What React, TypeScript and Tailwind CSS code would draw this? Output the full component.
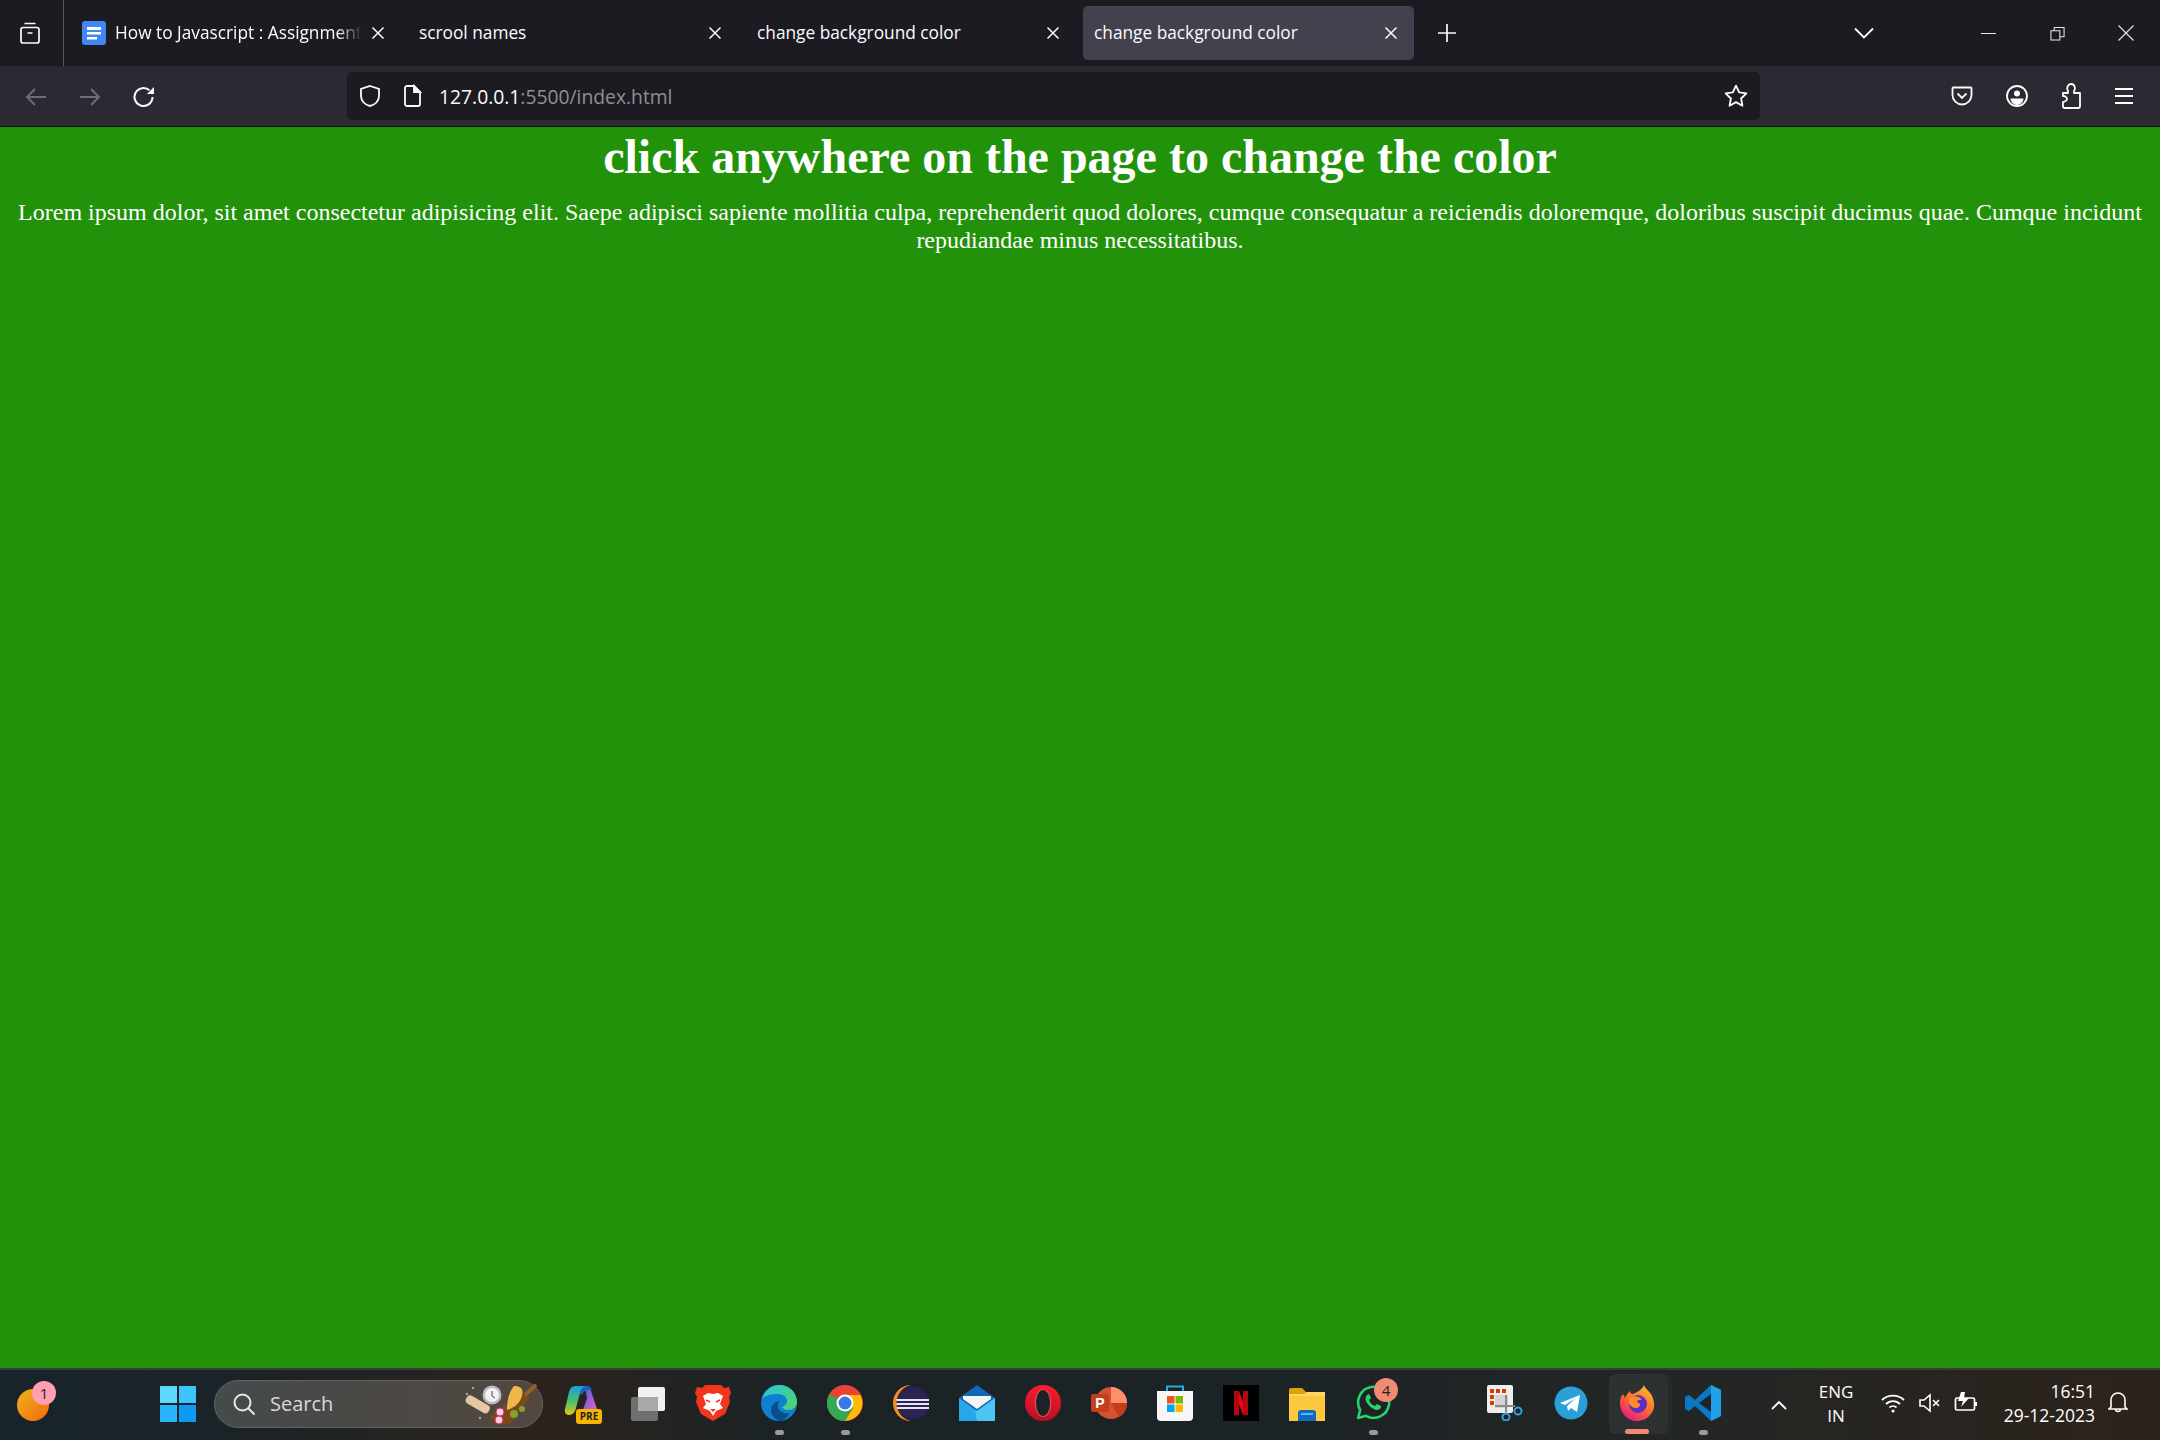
import type { ReactNode } from "react";

const chromeFont = "font-['Open_Sans','Noto_Sans',sans-serif]";

function CloseIcon({ className = "" }: { className?: string }) {
    return (
        <svg viewBox="0 0 16 16" className={`h-4 w-4 shrink-0 ${className}`} fill="none" stroke="#fbfbfe" strokeWidth="1.5">
            <path d="M2.500 2.500l11 11M13.500 2.500l-11 11" />
        </svg>
    );
}

interface TabProps {
    title: string;
    active?: boolean;
    icon?: ReactNode;
    width: string;
    right: string;
    fade?: boolean;
}

function Tab({ title, active, icon, width, right, fade }: TabProps) {
    return (
        <div className={`${width} ${right} flex h-[54px] shrink-0 items-center rounded-[5px] pl-[11px] ${active ? "bg-[#42414d]" : ""}`}>
            {icon}
            <span
                className={`mr-[8px] min-w-0 flex-1 overflow-hidden whitespace-nowrap text-[17.300px] text-[#fbfbfe] ${fade ? "[mask-image:linear-gradient(to_right,black_90%,transparent)]" : ""}`}
            >
                {title}
            </span>
            <CloseIcon />
        </div>
    );
}

function DocsIcon() {
    return (
        <svg viewBox="0 0 24 24" className="mr-[9px] h-6 w-6 shrink-0">
            <rect width="24" height="24" rx="3" fill="#4285f4" />
            <path d="M5 6h14v3H5zM5 11h14v2.500H5zM5 16h10v2.500H5z" fill="#fff" />
        </svg>
    );
}

function Tool({ children, className = "" }: { children: ReactNode; className?: string }) {
    return <div className={`flex h-full shrink-0 items-center justify-center ${className}`}>{children}</div>;
}

function Slot({ children, dot }: { children?: ReactNode; dot?: boolean }) {
    return (
        <div className="flex h-full w-[66px] shrink-0 flex-col items-center pt-[15px]">
            <div className="h-9 w-9">{children}</div>
            {dot && <div className="mt-[9px] h-[5px] w-[9px] rounded-full bg-[#9a9a9a]" />}
        </div>
    );
}

function Badge({ value, color, className }: { value: string; color: string; className: string }) {
    return (
        <div className={`absolute flex h-6 w-6 items-center justify-center rounded-full text-[15px] text-[#222] ${color} ${className}`}>
            {value}
        </div>
    );
}

function Copilot() {
    return (
        <div className="relative h-9 w-9">
            <svg viewBox="0 0 36 36" className="h-9 w-9">
                <defs>
                    <linearGradient id="copA" x1="0" y1="0" x2="0" y2="1">
                        <stop offset="0" stopColor="#1f9de0" />
                        <stop offset="0.55" stopColor="#4fc06a" />
                        <stop offset="1" stopColor="#f2c318" />
                    </linearGradient>
                    <linearGradient id="copB" x1="0" y1="0" x2="1" y2="1">
                        <stop offset="0" stopColor="#2f6fe0" />
                        <stop offset="0.5" stopColor="#a45ad8" />
                        <stop offset="1" stopColor="#ee6ea8" />
                    </linearGradient>
                </defs>
                <path d="M22 1c3 0 5 2 6 5l6 18c1 4-1 6-4 6h-8c-3 0-3-3-2-5l4-12z" fill="url(#copB)" />
                <path d="M12 1h11c-3 1-5 3-6 7l-4 15c-1 4-3 7-7 7-3 0-5-3-4-6L6 7c1-4 3-6 6-6z" fill="url(#copA)" />
                <path d="M12 1h12c3 0 4 2 5 5 -3-2-7-1-9 2-1 2-2 3-3 0 1-4 3-6 6-7z" fill="#1664c8" />
            </svg>
            <div className="absolute bottom-[-3px] right-[-3px] flex h-[15px] w-[26px] items-center justify-center rounded-[3px] bg-[#f7b500] text-[10px] font-bold text-[#222]">
                PRE
            </div>
        </div>
    );
}

function TaskView() {
    return (
        <svg viewBox="0 0 36 36" className="h-9 w-9">
            <rect x="2" y="12" width="27" height="24" rx="2" fill="#6f6f6f" />
            <rect x="9" y="2" width="27" height="24" rx="2" fill="#f1f1f1" />
            <rect x="9" y="12" width="20" height="14" fill="#a8a8a8" />
        </svg>
    );
}

function Brave() {
    return (
        <svg viewBox="0 0 36 36" className="h-9 w-9">
            <path d="M10 0h16l3 3 5-1 2 6-2 4 1 5-5 12-12 7-12-7L1 17l1-5-2-4 2-6 5 1z" fill="#f1361d" />
            <path d="M18 9l-5-1-5 3 3 8-3 4 7 3 3 5 3-5 7-3-3-4 3-8-5-3z" fill="#fff" />
            <path d="M15 24h6l-3 3z" fill="#f1361d" />
            <path d="M11 15l4 2M25 15l-4 2" stroke="#f1361d" strokeWidth="1.500" />
        </svg>
    );
}

function Edge() {
    return (
        <svg viewBox="0 0 36 36" className="h-9 w-9">
            <defs>
                <linearGradient id="edgeA" x1="0" y1="0" x2="1" y2="1">
                    <stop offset="0" stopColor="#2cc3d8" />
                    <stop offset="1" stopColor="#52d66a" />
                </linearGradient>
            </defs>
            <circle cx="18" cy="18" r="18" fill="#0f7fd0" />
            <path d="M1 15C3 6 10 0 18 0c10 0 18 7 18 17 0 5-4 8-9 8-3 0-5-1-6-3 3-1 5-3 5-6 0-4-4-7-9-7-7 0-14 1-16 6z" fill="url(#edgeA)" />
            <path d="M20 36c-6-1-10-6-10-11 0-5 4-9 9-9-3 2-3 7 0 10 3 2 6 3 10 2-4 5-6 8-9 8z" fill="#0b4f8a" />
        </svg>
    );
}

function Chrome() {
    return (
        <svg viewBox="0 0 36 36" className="h-9 w-9">
            <circle cx="18" cy="18" r="18" fill="#ea4335" />
            <path d="M18 18L2.400 9A18 18 0 0 0 18 36l8-14z" fill="#34a853" />
            <path d="M18 10h15.500A18 18 0 0 1 18 36l8-13z" fill="#fbbc04" />
            <circle cx="18" cy="18" r="8.500" fill="#fff" />
            <circle cx="18" cy="18" r="6.500" fill="#3b78e7" />
        </svg>
    );
}

function Eclipse() {
    return (
        <svg viewBox="0 0 36 36" className="h-9 w-9">
            <path d="M18 0C8 0 0 8 0 18s8 18 18 18C9 34 4 27 4 18S9 2 18 0z" fill="#f3901d" />
            <circle cx="20" cy="18" r="16.500" fill="#2c2255" />
            <path d="M3.500 14h33v2h-33zM3.500 18h33v2h-33zM4 22h32v2H4z" fill="#e8e6f0" />
        </svg>
    );
}

function Mail() {
    return (
        <svg viewBox="0 0 36 36" className="h-9 w-9">
            <path d="M18 0l18 13v23H0V13z" fill="#0f67b5" />
            <path d="M4 11h28v3L18 24 4 14z" fill="#f4f4f4" />
            <path d="M0 13l18 13 18-13v23H0z" fill="#27a6ea" />
            <path d="M36 13v23H18l-2-11 2 1z" fill="#4cc4f4" />
        </svg>
    );
}

function Opera() {
    return (
        <svg viewBox="0 0 36 36" className="h-9 w-9">
            <defs>
                <linearGradient id="opA" x1="0" y1="0" x2="0" y2="1">
                    <stop offset="0" stopColor="#ff1b2d" />
                    <stop offset="1" stopColor="#b80f22" />
                </linearGradient>
            </defs>
            <circle cx="18" cy="18" r="18" fill="url(#opA)" />
            <ellipse cx="18" cy="18" rx="8.500" ry="14" fill="#d44a58" />
            <ellipse cx="18" cy="18" rx="7" ry="13" fill="#1c2326" />
        </svg>
    );
}

function PowerPoint() {
    return (
        <svg viewBox="0 0 36 36" className="h-9 w-9">
            <circle cx="20" cy="18" r="16" fill="#d35230" />
            <path d="M20 2a16 16 0 0 1 16 16H20z" fill="#ff8f6b" />
            <path d="M20 18h16a16 16 0 0 1-8 14z" fill="#c43e1c" />
            <rect x="0" y="9" width="18" height="18" rx="2" fill="#c43e1c" />
            <text x="9" y="23" textAnchor="middle" fontFamily="Liberation Sans" fontWeight="700" fontSize="14" fill="#fff">
                P
            </text>
        </svg>
    );
}

function Store() {
    return (
        <svg viewBox="0 0 36 36" className="h-9 w-9">
            <path d="M10 7V1.500h16V7" fill="none" stroke="#1eaee8" strokeWidth="2" />
            <path d="M0 6h36v26a4 4 0 0 1-4 4H4a4 4 0 0 1-4-4z" fill="#f6f6f6" />
            <rect x="10" y="11" width="7.500" height="7.500" fill="#f25022" />
            <rect x="18.500" y="11" width="7.500" height="7.500" fill="#7fba00" />
            <rect x="10" y="19.500" width="7.500" height="7.500" fill="#00a4ef" />
            <rect x="18.500" y="19.500" width="7.500" height="7.500" fill="#ffb900" />
        </svg>
    );
}

function Netflix() {
    return (
        <svg viewBox="0 0 36 36" className="h-9 w-9">
            <rect width="36" height="36" fill="#000" />
            <path d="M11 6h5l9 24h-5z" fill="#e50914" />
            <path d="M11 6h5v24l-5 .500zM20 6h5v24.500L20 30z" fill="#b20710" />
        </svg>
    );
}

function Files() {
    return (
        <svg viewBox="0 0 36 36" className="h-9 w-9">
            <path d="M0 5a2 2 0 0 1 2-2h11l4 4h19v8H0z" fill="#e0a106" />
            <path d="M0 9h36v27H0z" fill="#fcc93e" />
            <path d="M0 9h15l3-2h18v4H0z" fill="#ffd862" />
            <path d="M9 36v-8a3 3 0 0 1 3-3h12a3 3 0 0 1 3 3v8z" fill="#0f6cbd" />
            <rect x="12" y="28" width="12" height="2" fill="#59b4ee" />
        </svg>
    );
}

function WhatsApp() {
    return (
        <svg viewBox="0 0 36 36" className="h-9 w-9">
            <path d="M3 33l2.200-8A15.500 15.500 0 1 1 11 30.800z" fill="none" stroke="#25d366" strokeWidth="2.600" strokeLinejoin="round" />
            <path d="M12 10c-2 2-2 5 0 8 3 4 6 6 9 7 3 0 5-1 5-4l-4-2-2 2c-3-1-5-3-6-6l2-2-2-4z" fill="#25d366" />
        </svg>
    );
}

function Snip() {
    return (
        <svg viewBox="0 0 36 36" className="h-9 w-9">
            <rect x="0" y="0" width="26" height="28" rx="2" fill="#eeeeee" />
            <path d="M3 4h4v4H3zM9 4h4v4H9zM15 4h4v4h-4zM3 10h4v4H3zM3 16h4v4H3z" fill="#d83b01" />
            <path d="M8 10h13v13H8z" fill="#d4d4d4" />
            <path d="M19 10v17M8 21h20" stroke="#8a8a8a" strokeWidth="2" />
            <circle cx="31" cy="26" r="3.500" fill="none" stroke="#2aa4dc" strokeWidth="2" />
            <circle cx="19" cy="32" r="3.500" fill="none" stroke="#2aa4dc" strokeWidth="2" />
        </svg>
    );
}

function Telegram() {
    return (
        <svg viewBox="0 0 36 36" className="h-9 w-9">
            <circle cx="18" cy="18" r="16.500" fill="#2a9fd8" />
            <path d="M7 18l20-8-3 17-6-4-3 3-1-5 9-8-11 7z" fill="#fff" />
        </svg>
    );
}

function Firefox() {
    return (
        <svg viewBox="0 0 36 36" className="h-9 w-9">
            <defs>
                <linearGradient id="foxA" x1="0.800" y1="0" x2="0.200" y2="1">
                    <stop offset="0" stopColor="#ffbd2e" />
                    <stop offset="0.5" stopColor="#ff6b2b" />
                    <stop offset="1" stopColor="#e31587" />
                </linearGradient>
            </defs>
            <path d="M25 0c1 4 6 6 8 11 3 7 3 13-1 18-4 5-9 7-14 7C8 36 1 28 1 18c0-4 1-7 3-9l2 4c1-3 3-5 5-7 0 2 1 3 3 3 4-2 9-4 11-9z" fill="url(#foxA)" />
            <circle cx="19" cy="19" r="9" fill="#5c2dc7" />
            <path d="M10 13c5-3 11-2 13 2-3-1-5 1-5 2 3 1 4 3 2 5-3 2-8 1-10-4z" fill="#ff8a2a" />
        </svg>
    );
}

function VsCode() {
    return (
        <svg viewBox="0 0 36 36" className="h-9 w-9">
            <path d="M26 0l10 5v26l-10 5L10 21l-6 5-4-2V12l4-2 6 5z" fill="#0a78c4" />
            <path d="M26 0l10 5v26l-10 5z" fill="#22a0ea" />
            <path d="M26 9L14 18l12 9z" fill="#1e2326" />
            <path d="M0 14l4-2 4 6-4 6-4-2 3-4z" fill="#0a78c4" />
        </svg>
    );
}

function SearchArt() {
    return (
        <svg viewBox="0 0 76 44" className="h-11 w-[76px]">
            <circle cx="3" cy="12" r="1" fill="#d8c9a8" />
            <circle cx="9" cy="6" r="1" fill="#c9c9d6" />
            <circle cx="16" cy="36" r="1" fill="#d8c9a8" />
            <path d="M26 34l30-22 10 3-20 27H32z" fill="#7b4a1c" />
            <path d="M50 4c6 0 10 2 8 10-2 7-8 12-15 14 0-10 2-18 7-24z" fill="#eeb64b" />
            <rect x="1" y="18" width="26" height="9" rx="4" transform="rotate(30 14 22)" fill="#e3c8a0" />
            <circle cx="28" cy="13" r="9.500" fill="#b9b9c8" />
            <circle cx="28" cy="13" r="7" fill="#f2f2f2" />
            <path d="M28 9v5l3 2" stroke="#444" strokeWidth="1" fill="none" />
            <circle cx="36" cy="30" r="4" fill="#f7d5e0" stroke="#e0265e" />
            <circle cx="35" cy="38" r="4" fill="#f7d5e0" stroke="#e0265e" />
            <circle cx="50" cy="32" r="4" fill="#8aa02a" />
            <circle cx="58" cy="27" r="3" fill="#8aa02a" />
            <path d="M62 12l9-8" stroke="#9a5e22" strokeWidth="4" strokeLinecap="round" />
        </svg>
    );
}

export default function App() {
    return (
        <div className="flex h-[1440px] w-[2160px] flex-col overflow-hidden bg-[#22920a]">
            {/* tab strip */}
            <div className={`flex h-[66px] shrink-0 items-center bg-[#1c1b22] ${chromeFont}`}>
                <div className="flex h-full w-[64px] shrink-0 items-center justify-center border-r border-[#55555c] pr-[3px]">
                    <svg viewBox="0 0 24 24" className="h-6 w-6" fill="none" stroke="#fbfbfe" strokeWidth="1.700">
                        <path d="M6.500 2.500h11M3 8.500a2 2 0 0 1 2-2h14a2 2 0 0 1 2 2V20a2 2 0 0 1-2 2H5a2 2 0 0 1-2-2zM9.500 12h5" />
                    </svg>
                </div>
                <div className="flex pl-[7px]">
                    <Tab title="How to Javascript : Assignment" width="w-[337px]" right="pr-[22px]" icon={<DocsIcon />} fade />
                    <Tab title="scrool names" width="w-[338px]" right="pr-[23px]" />
                    <Tab title="change background color" width="w-[337px]" right="pr-[22px]" />
                    <Tab title="change background color" width="w-[331px]" right="pr-[15px]" active />
                </div>
                <svg viewBox="0 0 20 20" className="ml-[23px] h-5 w-5" fill="none" stroke="#fbfbfe" strokeWidth="1.700">
                    <path d="M10 1v18M1 10h18" />
                </svg>
                <svg viewBox="0 0 20 12" className="ml-[397px] h-3 w-5" fill="none" stroke="#fbfbfe" strokeWidth="1.800">
                    <path d="M1 1.500l9 9 9-9" />
                </svg>
                <div className="ml-auto flex h-full items-center">
                    <Tool className="w-[69px]">
                        <div className="h-px w-[15px] bg-[#e8e8e8]" />
                    </Tool>
                    <Tool className="w-[69px]">
                        <svg viewBox="0 0 16 16" className="h-[15px] w-[15px]" fill="none" stroke="#e8e8e8" strokeWidth="1.100">
                            <path d="M1 5h9.500v10H1zM4.500 5V1.500H15v10h-4.500" />
                        </svg>
                    </Tool>
                    <Tool className="w-[68px]">
                        <svg viewBox="0 0 16 16" className="h-4 w-4" fill="none" stroke="#e8e8e8" strokeWidth="1.100">
                            <path d="M.5.500l15 15M15.500.500l-15 15" />
                        </svg>
                    </Tool>
                </div>
            </div>

            {/* toolbar */}
            <div className={`flex h-[61px] shrink-0 items-center border-b border-[#0f0f13] bg-[#2b2a33] ${chromeFont}`}>
                <Tool className="ml-[9px] w-[54px] pt-[1px]">
                    <svg viewBox="0 0 24 24" className="h-6 w-6" fill="none" stroke="#6e6d75" strokeWidth="2">
                        <path d="M22 12H3M11 4l-8 8 8 8" />
                    </svg>
                </Tool>
                <Tool className="w-[54px] pt-[1px]">
                    <svg viewBox="0 0 24 24" className="h-6 w-6" fill="none" stroke="#6e6d75" strokeWidth="2">
                        <path d="M2 12h19M13 4l8 8-8 8" />
                    </svg>
                </Tool>
                <Tool className="w-[54px] pt-[1px]">
                    <svg viewBox="0 0 24 24" className="h-6 w-6" fill="none" stroke="#fbfbfe" strokeWidth="2">
                        <path d="M20.500 12a9 9 0 1 1-3-6.700" />
                        <path d="M22 2v7h-7z" fill="#fbfbfe" stroke="none" />
                    </svg>
                </Tool>
                <div className="ml-[176px] flex h-12 w-[1413px] shrink-0 items-center rounded-[5px] bg-[#1c1b22] pl-[11px] pr-[11px]">
                    <svg viewBox="0 0 24 24" className="h-6 w-6" fill="none" stroke="#fbfbfe" strokeWidth="1.800">
                        <path d="M12 2l9 3v7c0 5-4 9-9 10-5-1-9-5-9-10V5z" />
                    </svg>
                    <svg viewBox="0 0 20 24" className="ml-[20px] h-6 w-5" fill="none" stroke="#fbfbfe" strokeWidth="1.800">
                        <path d="M3 4a2 2 0 0 1 2-2h7l6 6v12a2 2 0 0 1-2 2H5a2 2 0 0 1-2-2z" />
                        <path d="M12 2l6 6h-6z" fill="#fbfbfe" />
                    </svg>
                    <span className="ml-[17px] flex-1 whitespace-nowrap pt-[2px] text-[19.300px] text-[#fbfbfe]">
                        127.0.0.1<span className="text-[#8f8f94]">:5500/index.html</span>
                    </span>
                    <svg viewBox="0 0 24 24" className="h-[26px] w-[26px]" fill="none" stroke="#fbfbfe" strokeWidth="1.700" strokeLinejoin="round">
                        <path d="M12 2.500l2.900 6.200 6.700.9-4.900 4.700 1.200 6.700-5.900-3.300-5.900 3.300 1.200-6.700-4.900-4.700 6.700-.9z" />
                    </svg>
                </div>
                <Tool className="ml-[175px] w-[54px]">
                    <svg viewBox="0 0 24 24" className="h-6 w-6" fill="none" stroke="#fbfbfe" strokeWidth="1.800">
                        <path d="M3 3.500h18a1 1 0 0 1 .5.500v7a9.500 9.500 0 0 1-19 0V4a1 1 0 0 1 .5-.500z" />
                        <path d="M7.500 9.500l4.500 4.500 4.500-4.500" />
                    </svg>
                </Tool>
                <Tool className="w-[55px]">
                    <svg viewBox="0 0 24 24" className="h-6 w-6" fill="none" stroke="#fbfbfe" strokeWidth="1.800">
                        <circle cx="12" cy="12" r="10" />
                        <circle cx="12" cy="9.500" r="3" fill="#fbfbfe" stroke="none" />
                        <path d="M5.500 14.500h13a6.500 6.500 0 0 1-13 0z" fill="#fbfbfe" stroke="none" />
                    </svg>
                </Tool>
                <Tool className="w-[54px]">
                    <svg viewBox="0 0 24 28" className="h-7 w-6" fill="none" stroke="#fbfbfe" strokeWidth="1.800" strokeLinejoin="round">
                        <path d="M5 26h14a2 2 0 0 0 2-2V11h-6V9c2-2 1-7-3-7-3 0-5 4-3 7v2H4v3c3 0 4 2 4 3s-2 3-4 3v4a2 2 0 0 0 1 2z" />
                    </svg>
                </Tool>
                <Tool className="w-[51px]">
                    <svg viewBox="0 0 20 20" className="h-5 w-5" fill="none" stroke="#fbfbfe" strokeWidth="1.800">
                        <path d="M1 3h18M1 10h18M1 17h18" />
                    </svg>
                </Tool>
            </div>

            {/* page content */}
            <main className="flex-1 px-[11px] text-center font-['Liberation_Serif',serif] text-white">
                <h1 className="mt-[5px] text-[48px] font-bold leading-[50px]">click anywhere on the page to change the color</h1>
                <p className="mt-[17px] text-[24px] leading-[27.500px]">
                    Lorem ipsum dolor, sit amet consectetur adipisicing elit. Saepe adipisci sapiente mollitia culpa, reprehenderit quod dolores, cumque consequatur a reiciendis doloremque, doloribus suscipit ducimus quae. Cumque incidunt repudiandae minus necessitatibus.
                </p>
            </main>

            {/* windows taskbar */}
            <div className="flex h-[72px] shrink-0 items-start border-t-2 border-[#3a3d3e] bg-[linear-gradient(90deg,#18242a_0%,#1b2327_12%,#2c231c_25%,#1b2326_36%,#1c2326_60%,#242624_80%,#2c231c_98%)] font-['Open_Sans','Noto_Sans',sans-serif] text-white">
                <div className="relative ml-[17px] mt-[19px] h-[32px] w-[32px] rounded-full bg-[linear-gradient(135deg,#f2b31f,#f26a0a)]">
                    <Badge value="1" color="bg-[#ff9fb0]" className="right-[-7px] top-[-8px]" />
                </div>
                <div className="ml-[111px] mt-[16px] grid h-[36px] w-[36px] grid-cols-2 gap-[2px]">
                    <div className="bg-[#5fd8fb]" />
                    <div className="bg-[#3cc5fb]" />
                    <div className="bg-[#28b5fb]" />
                    <div className="bg-[#0c9af5]" />
                </div>
                <div className="ml-[18px] mt-[10px] flex h-12 w-[329px] shrink-0 items-center rounded-full border border-[#666660] bg-[linear-gradient(90deg,#454a4b,#51473f)] pl-[17px] pr-[2px]">
                    <svg viewBox="0 0 24 24" className="h-6 w-6" fill="none" stroke="#e8e8e8" strokeWidth="2">
                        <circle cx="10.500" cy="10.500" r="8" />
                        <path d="M16.500 16.500l6 6" />
                    </svg>
                    <span className="ml-[14px] flex-1 text-[20px] text-[#d8d8d8]">Search</span>
                    <SearchArt />
                </div>
                <div className="ml-[5px] flex h-full">
                    <Slot><Copilot /></Slot>
                    <Slot><TaskView /></Slot>
                    <Slot><Brave /></Slot>
                    <Slot dot><Edge /></Slot>
                    <Slot dot><Chrome /></Slot>
                    <Slot><Eclipse /></Slot>
                    <Slot><Mail /></Slot>
                    <Slot><Opera /></Slot>
                    <Slot><PowerPoint /></Slot>
                    <Slot><Store /></Slot>
                    <Slot><Netflix /></Slot>
                    <Slot><Files /></Slot>
                    <Slot dot>
                        <div className="relative h-9 w-9">
                            <WhatsApp />
                            <Badge value="4" color="bg-[#f08a70]" className="right-[-7px] top-[-7px]" />
                        </div>
                    </Slot>
                    <Slot />
                    <Slot><Snip /></Slot>
                    <Slot><Telegram /></Slot>
                    <div className="relative flex h-full w-[66px] shrink-0 flex-col items-center pt-[15px]">
                        <div className="absolute left-[5px] top-[4px] h-[60px] w-[59px] rounded-[6px] bg-[#2e3132] shadow-[4px_0_0_#26292a]" />
                        <div className="relative h-9 w-9"><Firefox /></div>
                        <div className="relative mt-[8px] h-[5px] w-6 rounded-full bg-[#f28a70]" />
                    </div>
                    <Slot dot><VsCode /></Slot>
                </div>
                <div className="ml-[35px] mt-[30px]">
                    <svg viewBox="0 0 16 10" className="h-[10px] w-4" fill="none" stroke="#fff" strokeWidth="1.800">
                        <path d="M1 9l7-7 7 7" />
                    </svg>
                </div>
                <div className="ml-[29px] mt-[10px] w-[40px] text-center text-[17px] leading-[24px]">
                    <div>ENG</div>
                    <div>IN</div>
                </div>
                <svg viewBox="0 0 24 20" className="ml-[25px] mt-[23px] h-5 w-6" fill="none" stroke="#fff" strokeWidth="1.800">
                    <path d="M1 7a16 16 0 0 1 22 0M5 11a10 10 0 0 1 14 0M8.500 14.500a5 5 0 0 1 7 0" />
                    <circle cx="12" cy="18" r="1.500" fill="#fff" stroke="none" />
                </svg>
                <svg viewBox="0 0 24 20" className="ml-[13px] mt-[23px] h-5 w-6" fill="none" stroke="#fff" strokeWidth="1.600">
                    <path d="M2 7h4l6-5v16l-6-5H2zM15 7l6 6M21 7l-6 6" />
                </svg>
                <svg viewBox="0 0 24 24" className="ml-[11px] mt-[21px] h-6 w-6" fill="none" stroke="#fff" strokeWidth="1.700">
                    <path d="M4 7h16a1.500 1.500 0 0 1 1.500 1.500v9A1.500 1.500 0 0 1 20 19H4a1.500 1.500 0 0 1-1.500-1.500v-9A1.500 1.500 0 0 1 4 7z" />
                    <path d="M8 1L5 10h5l-2 6 8-9h-5l1-6z" fill="#fff" stroke="none" />
                    <path d="M22 11h2v4h-2z" fill="#fff" stroke="none" />
                </svg>
                <div className="ml-auto mt-[9px] text-right text-[17.500px] leading-[24px]">
                    <div>16:51</div>
                    <div>29-12-2023</div>
                </div>
                <svg viewBox="0 0 20 24" className="ml-[13px] mr-[32px] mt-[20px] h-6 w-5" fill="none" stroke="#fff" strokeWidth="1.600">
                    <path d="M3 17V10a7 7 0 0 1 14 0v7l2 2H1zM7.500 19a2.500 2.500 0 0 0 5 0" />
                </svg>
            </div>
        </div>
    );
}
